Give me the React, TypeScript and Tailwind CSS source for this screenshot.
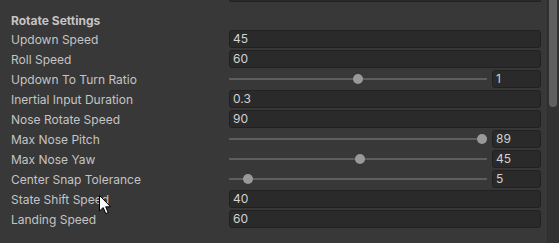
import React from "react";

type Row =
  | { label: string; kind: "field"; value: string }
  | { label: string; kind: "slider"; value: string; frac: number };

const rows: Row[] = [
  { label: "Updown Speed", kind: "field", value: "45" },
  { label: "Roll Speed", kind: "field", value: "60" },
  { label: "Updown To Turn Ratio", kind: "slider", value: "1", frac: 0.5 },
  { label: "Inertial Input Duration", kind: "field", value: "0.3" },
  { label: "Nose Rotate Speed", kind: "field", value: "90" },
  { label: "Max Nose Pitch", kind: "slider", value: "89", frac: 1 },
  { label: "Max Nose Yaw", kind: "slider", value: "45", frac: 0.508 },
  { label: "Center Snap Tolerance", kind: "slider", value: "5", frac: 0.056 },
  { label: "State Shift Speed", kind: "field", value: "40" },
  { label: "Landing Speed", kind: "field", value: "60" },
];

function Field({ value, className = "" }: { value: string; className?: string }) {
  return (
    <div
      className={
        "h-[18px] rounded-[3px] border border-[#212121] bg-[#2a2a2a] pl-[3px] flex items-center text-[12px] text-[#d2d2d2] leading-none " +
        className
      }
    >
      {value}
    </div>
  );
}

function Slider({ value, frac }: { value: string; frac: number }) {
  return (
    <div className="flex items-center gap-[5px]">
      <div className="relative flex-1 h-[18px] flex items-center">
        <div className="w-full h-[2px] bg-[#5e5e5e]" />
        <div
          className="absolute top-[4px] w-[10px] h-[10px] rounded-full bg-[#999999]"
          style={{ left: `calc(${frac} * (100% - 10px))` }}
        />
      </div>
      <Field value={value} className="w-[49px]" />
    </div>
  );
}

export default function App() {
  return (
    <div
      className="w-[559px] h-[243px] bg-[#383838] flex overflow-hidden"
      style={{ fontFamily: "Inter, 'Noto Sans', sans-serif" }}
    >
      <div className="w-[547px] flex flex-col">
        <div className="flex h-[2px]">
          <div className="w-[229px]" />
          <div className="w-[312px] h-[2px] bg-[#2a2a2a] border-b border-x border-[#212121] rounded-b-[3px]" />
        </div>
        <div className="mt-[7px] h-[20px] pl-[11px] pt-[4px] flex items-center text-[12px] font-bold text-[#c4c4c4]">
          Rotate Settings
        </div>
        {rows.map((r) => (
          <div key={r.label} className="flex h-[20px] items-center">
            <div className="w-[229px] pl-[11px] text-[12px] text-[#c4c4c4] pt-[2px] whitespace-nowrap">
              {r.label}
            </div>
            <div className="w-[312px]">
              {r.kind === "field" ? (
                <Field value={r.value} />
              ) : (
                <Slider value={r.value} frac={r.frac} />
              )}
            </div>
          </div>
        ))}
      </div>
      <div className="w-[12px] h-full bg-[#323232] border-l border-[#2c2c2c] pl-[1px] pr-[2px]">
        <div className="w-[8px] h-[107px] bg-[#5f5f5f] rounded-b-full" />
      </div>
      <svg
        className="absolute"
        style={{ left: 99, top: 195 }}
        width="14"
        height="21"
        viewBox="0 0 14 21"
      >
        <path
          d="M0.5 0.5 L0.5 16 L4.2 12.6 L6.8 18.6 L9.2 17.6 L6.7 11.8 L11.6 11.8 Z"
          fill="white"
          stroke="black"
          strokeWidth="1"
        />
      </svg>
    </div>
  );
}
